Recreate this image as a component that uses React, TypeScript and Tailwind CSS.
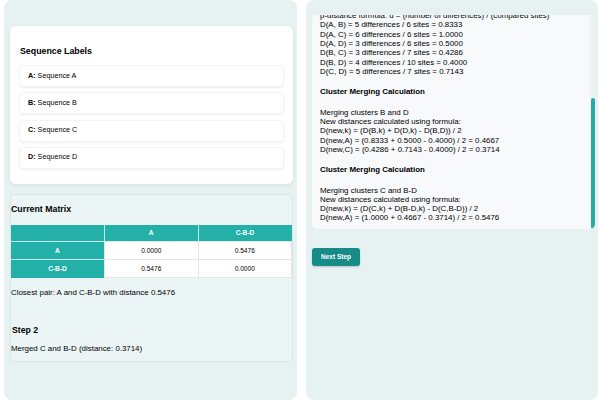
import { useEffect, useRef } from 'react';

const sequences = [
  { id: 'A', name: 'Sequence A' },
  { id: 'B', name: 'Sequence B' },
  { id: 'C', name: 'Sequence C' },
  { id: 'D', name: 'Sequence D' }
];

const matrix = [
  { label: 'A', values: ['0.0000', '0.5476'] },
  { label: 'C-B-D', values: ['0.5476', '0.0000'] }
];

const logBlocks = [
  {
    title: 'Sequence Alignment',
    lines: [
      'A: ATGCTAGC-TAG',
      'B: ATG-TAGGCTAC',
      'C: TTGCAAGCAT--',
      'D: ATGTTACGCTAG',
      '',
      'Gap positions (-) are excluded from comparison',
      'Compared sites differ for each pair',
      'Total pairs to compare: 6'
    ]
  },
  {
    title: 'Distance Calculation',
    lines: [
      'p-distance formula: d = (number of differences) / (compared sites)',
      'D(A, B) = 5 differences / 6 sites = 0.8333',
      'D(A, C) = 6 differences / 6 sites = 1.0000',
      'D(A, D) = 3 differences / 6 sites = 0.5000',
      'D(B, C) = 3 differences / 7 sites = 0.4286',
      'D(B, D) = 4 differences / 10 sites = 0.4000',
      'D(C, D) = 5 differences / 7 sites = 0.7143'
    ]
  },
  {
    title: 'Cluster Merging Calculation',
    lines: [
      'Merging clusters B and D',
      'New distances calculated using formula:',
      'D(new,k) = (D(B,k) + D(D,k) - D(B,D)) / 2',
      'D(new,A) = (0.8333 + 0.5000 - 0.4000) / 2 = 0.4667',
      'D(new,C) = (0.4286 + 0.7143 - 0.4000) / 2 = 0.3714'
    ]
  },
  {
    title: 'Cluster Merging Calculation',
    lines: [
      'Merging clusters C and B-D',
      'New distances calculated using formula:',
      'D(new,k) = (D(C,k) + D(B-D,k) - D(C,B-D)) / 2',
      'D(new,A) = (1.0000 + 0.4667 - 0.3714) / 2 = 0.5476'
    ]
  }
];

export default function App() {
  const logRef = useRef<HTMLDivElement>(null);

  // log is shown scrolled to the latest step
  useEffect(() => {
    if (logRef.current) {
      logRef.current.scrollTop = logRef.current.scrollHeight;
    }
  }, []);

  return (
    <div className="w-[602px] h-[402px] bg-white font-['Liberation_Sans',Arial,sans-serif] text-black overflow-hidden">
      <div className="grid grid-cols-[293px_292px] gap-[9px] pl-[4px]">
        {/* left panel */}
        <div className="h-[400px] bg-[#e6f2f2] rounded-[8px] px-[6px] pt-[26px] pr-[4px]">
          <div className="bg-white rounded-[6px] shadow-[0_1px_4px_rgba(0,0,0,0.08)] pt-[19px] pb-[15px] px-[9px]">
            <h2 className="text-[8.8px] leading-[12px] font-bold pl-[1px] mb-[8px]">Sequence Labels</h2>
            <div className="flex flex-col gap-[5.3px]">
              {sequences.map((s) => (
                <div
                  key={s.id}
                  className="h-[22px] flex items-center px-[8px] bg-white rounded-[4px] shadow-[0_1px_2px_rgba(0,0,0,0.07)] border border-[#f3f5f5] text-[7.2px] text-black"
                >
                  <span className="font-bold">{s.id}:</span>
                  <span className="ml-[2px]">{s.name}</span>
                </div>
              ))}
            </div>
          </div>

          <div className="mt-[10px] bg-[#ebf5f5] border border-[#d9e6e6] rounded-[5px] pt-[9px] pb-[8px]">
            <h3 className="text-[8.8px] leading-[11px] font-bold">Current Matrix</h3>
            <table className="w-full mt-[10px] border-collapse table-fixed text-[6.6px]">
              <thead>
                <tr className="h-[17px] bg-[#22b0a8] text-white font-bold">
                  <th className="border-r border-[#c9ecea]"></th>
                  <th className="border-r border-[#c9ecea]">A</th>
                  <th>C-B-D</th>
                </tr>
              </thead>
              <tbody>
                {matrix.map((row) => (
                  <tr key={row.label} className="h-[18px]">
                    <td className="bg-[#22b0a8] text-white font-bold text-center border-t border-[#c9ecea]">{row.label}</td>
                    {row.values.map((v, i) => (
                      <td key={i} className="bg-white text-center text-black border border-[#e2e6e6]">{v}</td>
                    ))}
                  </tr>
                ))}
              </tbody>
            </table>
            <p className="mt-[10px] text-[7.9px] leading-[9.3px] text-black">
              Closest pair: A and C-B-D with distance 0.5476
            </p>
            <h3 className="mt-[27px] pl-[1px] text-[8.7px] leading-[10.5px] font-bold">Step 2</h3>
            <p className="mt-[9px] text-[7.9px] leading-[9.3px] text-black">Merged C and B-D (distance: 0.3714)</p>
          </div>
        </div>

        {/* right panel */}
        <div className="h-[400px] bg-[#e6f2f2] rounded-[8px] pl-[6px] pr-[3px] pt-[15px]">
          <div className="relative h-[214px] bg-[#f7f9fa] rounded-[5px] overflow-hidden">
            <div
              ref={logRef}
              className="h-full overflow-hidden pl-[8px] pr-[8px] pt-[8px] pb-[6px] text-[7.9px] leading-[9.3px] text-black"
            >
              {logBlocks.map((block, bi) => (
                <div key={bi}>
                  <div className={`font-bold leading-[9.4px] mb-[11px] ${bi === 0 ? '' : 'mt-[11px]'}`}>{block.title}</div>
                  {block.lines.map((line, li) => (
                    <div key={li} className="h-[9.3px] whitespace-nowrap">{line}</div>
                  ))}
                </div>
              ))}
            </div>
            <div className="absolute top-0 right-0 w-[5px] h-full bg-[#eef2f3]"></div>
            <div className="absolute top-[83px] right-[0.5px] w-[4px] h-[131px] bg-[#2aa9a3] rounded-full"></div>
          </div>
          <button className="mt-[19px] h-[18px] px-[9px] bg-[#178b88] text-white text-[6.5px] font-bold rounded-[3px] shadow-[0_1px_2px_rgba(0,0,0,0.2)]">
            Next Step
          </button>
        </div>
      </div>
    </div>
  );
}
